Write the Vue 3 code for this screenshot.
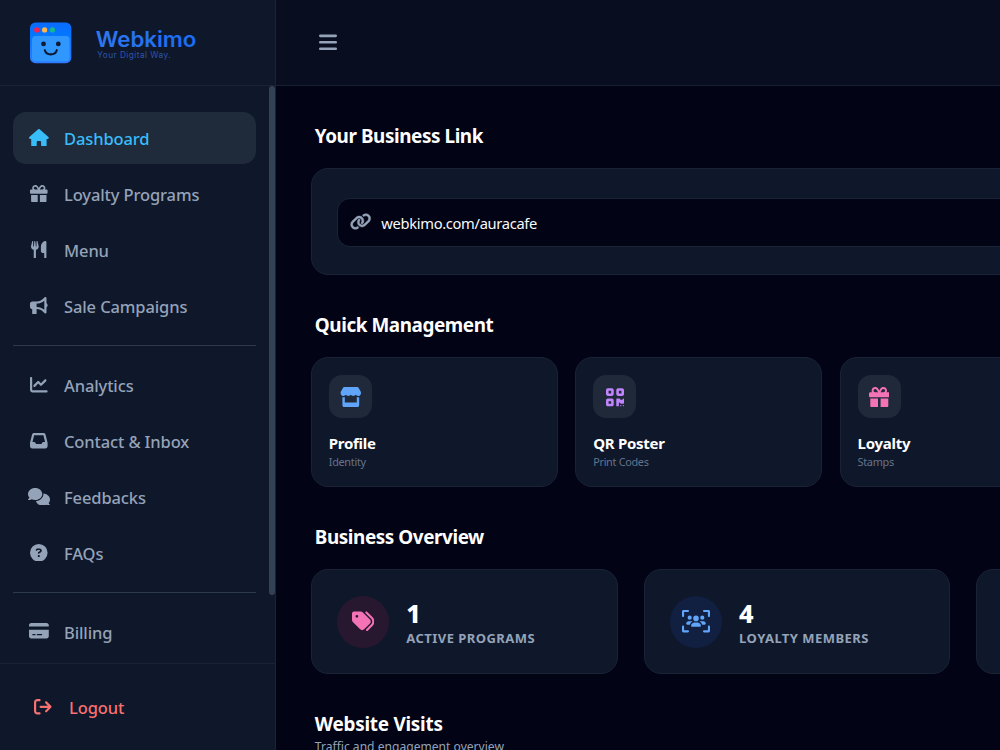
<script setup>
import { h } from 'vue'

const glyphs = {
  home: [576, 'M575.8 255.5c0 18-15 32.1-32 32.1l-32 0 .7 160.2c0 2.7-.2 5.4-.5 8.1l0 16.2c0 22.1-17.9 40-40 40l-16 0c-1.1 0-2.2 0-3.3-.1c-1.4 .1-2.8 .1-4.2 .1L416 512l-24 0c-22.1 0-40-17.9-40-40l0-24 0-64c0-17.7-14.3-32-32-32l-64 0c-17.7 0-32 14.3-32 32l0 64 0 24c0 22.1-17.9 40-40 40l-24 0-31.9 0c-1.5 0-3-.1-4.5-.2c-1.2 .1-2.4 .2-3.6 .2l-16 0c-22.1 0-40-17.9-40-40l0-112c0-.9 0-1.9 .1-2.8l0-69.7-32 0c-18 0-32-14-32-32.1c0-9 3-17 10-24L266.4 8c7-7 15-8 22-8s15 2 21 7L564.8 231.5c8 7 12 15 11 24z'],
  gift: [512, 'M190.5 68.8L225.3 128l-1.3 0-72 0c-22.1 0-40-17.9-40-40s17.9-40 40-40l2.2 0c14.9 0 28.8 7.9 36.3 20.8zM64 88c0 14.4 3.5 28 9.6 40L32 128c-17.7 0-32 14.3-32 32l0 64c0 17.7 14.3 32 32 32l448 0c17.7 0 32-14.3 32-32l0-64c0-17.7-14.3-32-32-32l-41.6 0c6.1-12 9.6-25.6 9.6-40c0-48.6-39.4-88-88-88l-2.2 0c-31.9 0-61.5 16.9-77.7 44.4L256 85.5l-24.1-41C215.7 16.9 186.1 0 154.2 0L152 0C103.4 0 64 39.4 64 88zm336 0c0 22.1-17.9 40-40 40l-72 0-1.3 0 34.8-59.2C329.1 55.9 342.9 48 357.8 48l2.2 0c22.1 0 40 17.9 40 40zM32 288l0 176c0 26.5 21.5 48 48 48l144 0 0-224L32 288zM288 512l144 0c26.5 0 48-21.5 48-48l0-176-192 0 0 224z'],
  utensils: [448, 'M416 0C400 0 288 32 288 176l0 112c0 35.3 28.7 64 64 64l32 0 0 128c0 17.7 14.3 32 32 32s32-14.3 32-32l0-128 0-112 0-208c0-17.7-14.3-32-32-32zM64 16C64 7.8 57.9 1 49.7 .1S34.2 4.6 32.4 12.5L2.1 148.8C.7 155.1 0 161.5 0 167.9c0 45.9 35.1 83.6 80 87.7L80 480c0 17.7 14.3 32 32 32s32-14.3 32-32l0-224.4c44.9-4.1 80-41.8 80-87.7c0-6.4-.7-12.8-2.1-19.1L191.6 12.5c-1.8-8-9.3-13.3-17.4-12.4S160 7.8 160 16l0 134.2c0 5.4-4.4 9.8-9.8 9.8c-5.1 0-9.3-3.9-9.8-9L127.9 14.6C127.2 6.3 120.3 0 112 0s-15.2 6.3-15.9 14.6L83.7 151c-.5 5.1-4.7 9-9.8 9c-5.4 0-9.8-4.4-9.8-9.8L64 16z'],
  bullhorn: [512, 'M480 32c0-12.9-7.8-24.6-19.8-29.6s-25.7-2.2-34.9 6.9L381.7 53c-48 48-113.1 75-181 75l-8.7 0-32 0-96 0c-35.3 0-64 28.7-64 64l0 96c0 35.3 28.7 64 64 64l0 128c0 17.7 14.3 32 32 32l64 0c17.7 0 32-14.3 32-32l0-128 8.7 0c67.9 0 133 27 181 75l43.6 43.6c9.2 9.2 22.9 11.9 34.9 6.9s19.8-16.6 19.8-29.6l0-147.6c18.6-8.8 32-32.5 32-60.4s-13.4-51.6-32-60.4L480 32zm-64 76.7L416 240l0 131.3C357.2 317.8 280.5 288 200.7 288l-8.7 0 0-96 8.7 0c79.8 0 156.5-29.8 215.3-83.3z'],
  chart: [512, 'M64 64c0-17.7-14.3-32-32-32S0 46.3 0 64L0 400c0 44.2 35.8 80 80 80l400 0c17.7 0 32-14.3 32-32s-14.3-32-32-32L80 416c-8.8 0-16-7.2-16-16L64 64zm406.6 86.6c12.5-12.5 12.5-32.8 0-45.3s-32.8-12.5-45.3 0L320 210.7l-57.4-57.4c-12.5-12.5-32.8-12.5-45.3 0l-112 112c-12.5 12.5-12.5 32.8 0 45.3s32.8 12.5 45.3 0L240 221.3l57.4 57.4c12.5 12.5 32.8 12.5 45.3 0l128-128z'],
  inbox: [512, 'M121 32C91.6 32 66 52 58.9 80.5L1.9 308.4C.6 313.5 0 318.7 0 323.9L0 416c0 35.3 28.7 64 64 64l384 0c35.3 0 64-28.7 64-64l0-92.1c0-5.2-.6-10.4-1.9-15.5l-57-227.9C446 52 420.4 32 391 32L121 32zm0 64l270 0 48 192-51.2 0c-12.1 0-23.2 6.8-28.6 17.7l-14.3 28.6c-5.4 10.8-16.5 17.7-28.6 17.7l-120.4 0c-12.1 0-23.2-6.8-28.6-17.7l-14.3-28.6c-5.4-10.8-16.5-17.7-28.6-17.7L73 288 121 96z'],
  comments: [640, 'M208 352c114.9 0 208-78.8 208-176S322.9 0 208 0S0 78.8 0 176c0 38.6 14.7 74.3 39.6 103.4c-3.5 9.4-8.7 17.7-14.2 24.7c-4.8 6.2-9.7 11-13.3 14.3c-1.8 1.6-3.3 2.9-4.3 3.7c-.5 .4-.9 .7-1.1 .8l-.2 .2C1 327.2-1.4 334.4 .8 340.9S9.1 352 16 352c21.8 0 43.8-5.6 62.1-12.5c9.2-3.5 17.8-7.4 25.2-11.4C134.1 343.3 169.8 352 208 352zM448 176c0 112.3-99.1 196.9-216.5 207C255.8 457.4 336.4 512 432 512c38.2 0 73.9-8.7 104.7-23.9c7.5 4 16 7.9 25.2 11.4c18.3 6.9 40.3 12.5 62.1 12.5c6.9 0 13.1-4.5 15.2-11.1c2.1-6.6-.2-13.8-5.8-17.9l-.2-.2c-.2-.2-.6-.4-1.1-.8c-1-.8-2.5-2-4.3-3.7c-3.6-3.3-8.5-8.1-13.3-14.3c-5.5-7-10.7-15.4-14.2-24.7c24.9-29 39.6-64.7 39.6-103.4c0-92.8-84.9-168.9-192.6-175.5c.4 5.1 .6 10.3 .6 15.5z'],
  question: [512, 'M256 512A256 256 0 1 0 256 0a256 256 0 1 0 0 512zM169.8 165.3c7.9-22.3 29.1-37.3 52.8-37.3l58.3 0c34.9 0 63.1 28.3 63.1 63.1c0 22.6-12.1 43.5-31.7 54.8L280 264.4c-.2 13-10.9 23.6-24 23.6c-13.3 0-24-10.7-24-24l0-13.5c0-8.6 4.6-16.5 12.1-20.8l44.3-25.4c4.7-2.7 7.6-7.7 7.6-13.1c0-8.4-6.8-15.1-15.1-15.1l-58.3 0c-3.4 0-6.4 2.1-7.5 5.3l-.4 1.2c-4.4 12.5-18.2 19-30.6 14.6s-19-18.2-14.6-30.6l.4-1.2zM224 352a32 32 0 1 1 64 0 32 32 0 1 1 -64 0z'],
  card: [576, 'M64 32C28.7 32 0 60.7 0 96l0 32 576 0 0-32c0-35.3-28.7-64-64-64L64 32zM576 224L0 224 0 416c0 35.3 28.7 64 64 64l448 0c35.3 0 64-28.7 64-64l0-192zM112 352l64 0c8.8 0 16 7.2 16 16s-7.2 16-16 16l-64 0c-8.8 0-16-7.2-16-16s7.2-16 16-16zm112 16c0-8.8 7.2-16 16-16l128 0c8.8 0 16 7.2 16 16s-7.2 16-16 16l-128 0c-8.8 0-16-7.2-16-16z'],
  logout: [512, 'M502.6 278.6c12.5-12.5 12.5-32.8 0-45.3l-128-128c-12.5-12.5-32.8-12.5-45.3 0s-12.5 32.8 0 45.3L402.7 224 192 224c-17.7 0-32 14.3-32 32s14.3 32 32 32l210.7 0-73.4 73.4c-12.5 12.5-12.5 32.8 0 45.3s32.8 12.5 45.3 0l128-128zM160 96c17.7 0 32-14.3 32-32s-14.3-32-32-32L96 32C43 32 0 75 0 128L0 384c0 53 43 96 96 96l64 0c17.7 0 32-14.3 32-32s-14.3-32-32-32l-64 0c-17.7 0-32-14.3-32-32l0-256c0-17.7 14.3-32 32-32l64 0z'],
  bars: [448, 'M0 96C0 78.3 14.3 64 32 64l384 0c17.7 0 32 14.3 32 32s-14.3 32-32 32L32 128C14.3 128 0 113.7 0 96zM0 256c0-17.7 14.3-32 32-32l384 0c17.7 0 32 14.3 32 32s-14.3 32-32 32L32 288c-17.7 0-32-14.3-32-32zM448 416c0 17.7-14.3 32-32 32L32 448c-17.7 0-32-14.3-32-32s14.3-32 32-32l384 0c17.7 0 32 14.3 32 32z'],
  link: [640, 'M579.8 267.7c56.5-56.5 56.5-148 0-204.5c-50-50-128.8-56.5-186.3-15.4l-1.6 1.1c-14.4 10.3-17.7 30.3-7.4 44.6s30.3 17.7 44.6 7.4l1.6-1.1c32.1-22.9 76-19.3 103.8 8.6c31.5 31.5 31.5 82.5 0 114L422.3 334.8c-31.5 31.5-82.5 31.5-114 0c-27.9-27.9-31.5-71.8-8.6-103.8l1.1-1.6c10.3-14.4 6.9-34.4-7.4-44.6s-34.4-6.9-44.6 7.4l-1.1 1.6C206.5 251.2 213 330 263 380c56.5 56.5 148 56.5 204.5 0L579.8 267.7zM60.2 244.3c-56.5 56.5-56.5 148 0 204.5c50 50 128.8 56.5 186.3 15.4l1.6-1.1c14.4-10.3 17.7-30.3 7.4-44.6s-30.3-17.7-44.6-7.4l-1.6 1.1c-32.1 22.9-76 19.3-103.8-8.6C74 372 74 321 105.5 289.5L217.7 177.2c31.5-31.5 82.5-31.5 114 0c27.9 27.9 31.5 71.8 8.6 103.9l-1.1 1.6c-10.3 14.4-6.9 34.4 7.4 44.6s34.4 6.9 44.6-7.4l1.1-1.6C433.5 260.8 427 182 377 132c-56.5-56.5-148-56.5-204.5 0L60.2 244.3z'],
  store: [576, 'M547.6 103.8L490.3 13.1C485.2 5 476.1 0 466.4 0L109.6 0C99.9 0 90.8 5 85.7 13.1L28.3 103.8c-29.6 46.8-3.4 111.9 51.9 119.4c4 .5 8.1 .8 12.1 .8c26.1 0 49.3-11.4 65.2-29c15.9 17.6 39.1 29 65.2 29c26.1 0 49.3-11.4 65.2-29c15.9 17.6 39.1 29 65.2 29c26.2 0 49.3-11.4 65.2-29c16 17.6 39.1 29 65.2 29c4.1 0 8.1-.3 12.1-.8c55.5-7.4 81.8-72.5 52.1-119.4zM499.7 254.9c0 0 0 0-.1 0c-5.3 .7-10.7 1.1-16.2 1.1c-12.4 0-24.3-1.9-35.4-5.3L448 384l-320 0 0-133.4c-11.2 3.5-23.2 5.4-35.6 5.4c-5.5 0-11-.4-16.3-1.1l-.1 0c-4.1-.6-8.1-1.3-12-2.3L64 384l0 64c0 35.3 28.7 64 64 64l320 0c35.3 0 64-28.7 64-64l0-64 0-131.4c-4 1-8 1.8-12.3 2.3z'],
  qr: [448, 'M0 80C0 53.5 21.5 32 48 32l96 0c26.5 0 48 21.5 48 48l0 96c0 26.5-21.5 48-48 48l-96 0c-26.5 0-48-21.5-48-48L0 80zM64 96l0 64 64 0 0-64L64 96zM0 336c0-26.5 21.5-48 48-48l96 0c26.5 0 48 21.5 48 48l0 96c0 26.5-21.5 48-48 48l-96 0c-26.5 0-48-21.5-48-48l0-96zm64 16l0 64 64 0 0-64-64 0zM304 32l96 0c26.5 0 48 21.5 48 48l0 96c0 26.5-21.5 48-48 48l-96 0c-26.5 0-48-21.5-48-48l0-96c0-26.5 21.5-48 48-48zm80 64l-64 0 0 64 64 0 0-64zM256 304c0-8.8 7.2-16 16-16l64 0c8.8 0 16 7.2 16 16s7.2 16 16 16l32 0c8.8 0 16-7.2 16-16s7.2-16 16-16s16 7.2 16 16l0 96c0 8.8-7.2 16-16 16l-64 0c-8.8 0-16-7.2-16-16s-7.2-16-16-16s-16 7.2-16 16l0 64c0 8.8-7.2 16-16 16l-32 0c-8.8 0-16-7.2-16-16l0-160zM368 480a16 16 0 1 1 0-32 16 16 0 1 1 0 32zm64 0a16 16 0 1 1 0-32 16 16 0 1 1 0 32z'],
  tags: [512, 'M345 39.1L472.8 168.4c52.4 53 52.4 138.2 0 191.2L360.8 472.9c-9.3 9.4-24.5 9.5-33.9 .2s-9.5-24.5-.2-33.9L438.6 325.9c33.9-34.3 33.9-89.4 0-123.7L310.9 72.9c-9.3-9.4-9.2-24.6 .2-33.9s24.6-9.2 33.9 .2zM0 229.5L0 80C0 53.5 21.5 32 48 32l149.5 0c17 0 33.3 6.7 45.3 18.7l168 168c25 25 25 65.5 0 90.5L277.3 442.7c-25 25-65.5 25-90.5 0l-168-168C6.7 262.7 0 246.5 0 229.5zM144 144a32 32 0 1 0 -64 0 32 32 0 1 0 64 0z'],
  users: [640, 'M48 48l88 0c13.3 0 24-10.7 24-24s-10.7-24-24-24L32 0C14.3 0 0 14.3 0 32L0 136c0 13.3 10.7 24 24 24s24-10.7 24-24l0-88zM175.8 224a48 48 0 1 0 0-96 48 48 0 1 0 0 96zm-26.5 32C119.9 256 96 279.9 96 309.3c0 14.7 11.9 26.7 26.7 26.7l56.1 0c8-34.1 32.8-61.7 65.2-73.6c-7.5-4.1-16.2-6.4-25.3-6.4l-69.3 0zm368 80c14.7 0 26.7-11.9 26.7-26.7c0-29.5-23.9-53.3-53.3-53.3l-69.3 0c-9.2 0-17.8 2.3-25.3 6.4c32.4 11.9 57.2 39.5 65.2 73.6l56.1 0zm-89.4 0c-8.6-24.3-29.9-42.6-55.9-47c-3.9-.7-7.9-1-12-1l-80 0c-4.1 0-8.1 .3-12 1c-26 4.4-47.3 22.7-55.9 47c-2.7 7.5-4.1 15.6-4.1 24c0 13.3 10.7 24 24 24l176 0c13.3 0 24-10.7 24-24c0-8.4-1.4-16.5-4.1-24zM464 224a48 48 0 1 0 0-96 48 48 0 1 0 0 96zm-80-32a64 64 0 1 0 -128 0 64 64 0 1 0 128 0zM504 48l88 0 0 88c0 13.3 10.7 24 24 24s24-10.7 24-24l0-104c0-17.7-14.3-32-32-32L504 0c-13.3 0-24 10.7-24 24s10.7 24 24 24zM48 464l0-88c0-13.3-10.7-24-24-24s-24 10.7-24 24L0 480c0 17.7 14.3 32 32 32l104 0c13.3 0 24-10.7 24-24s-10.7-24-24-24l-88 0zm456 0c-13.3 0-24 10.7-24 24s10.7 24 24 24l104 0c17.7 0 32-14.3 32-32l0-104c0-13.3-10.7-24-24-24s-24 10.7-24 24l0 88-88 0z'],
}

const Icon = ({ name, size, width }) => {
  const [w, d] = glyphs[name]
  return h('svg', {
    viewBox: `0 0 ${w} 512`,
    width: width || (w / 512) * size,
    height: size,
    preserveAspectRatio: 'none',
    fill: 'currentColor',
  }, [h('path', { d })])
}
Icon.props = ['name', 'size', 'width']

const nav = [
  [
    { icon: 'home', label: 'Dashboard', active: true },
    { icon: 'gift', label: 'Loyalty Programs' },
    { icon: 'utensils', label: 'Menu' },
    { icon: 'bullhorn', label: 'Sale Campaigns' },
  ],
  [
    { icon: 'chart', label: 'Analytics' },
    { icon: 'inbox', label: 'Contact & Inbox' },
    { icon: 'comments', label: 'Feedbacks' },
    { icon: 'question', label: 'FAQs' },
  ],
  [{ icon: 'card', label: 'Billing' }],
]

const quick = [
  { icon: 'store', width: 21.6, tone: 'blue', title: 'Profile', sub: 'Identity' },
  { icon: 'qr', tone: 'purple', title: 'QR Poster', sub: 'Print Codes' },
  { icon: 'gift', tone: 'pink', title: 'Loyalty', sub: 'Stamps' },
]

const stats = [
  { icon: 'tags', tone: 'pink', value: '1', label: 'Active Programs' },
  { icon: 'users', tone: 'blue', value: '4', label: 'Loyalty Members' },
]
</script>

<template>
  <div class="app">
    <aside class="sidebar">
      <div class="brand">
        <svg width="200" height="60" viewBox="24 12 200 60">
          <defs>
            <linearGradient id="tile" x1="0" y1="0" x2="0" y2="1">
              <stop offset="0" stop-color="#0a6cff" />
              <stop offset="0.3" stop-color="#0476ff" />
              <stop offset="1" stop-color="#2f7bff" />
            </linearGradient>
            <linearGradient id="word" x1="0" y1="0" x2="1" y2="0">
              <stop offset="0" stop-color="#2f78ee" />
              <stop offset="1" stop-color="#1a6cf2" />
            </linearGradient>
          </defs>
          <rect x="30" y="22.4" width="41.3" height="40.8" rx="5.5" fill="url(#tile)" />
          <rect x="32" y="36" width="37.5" height="25.2" rx="3.5" fill="#3097ff" />
          <circle cx="36.8" cy="29.9" r="2.6" fill="#fb1f4e" />
          <circle cx="44.6" cy="29.9" r="2.6" fill="#ffb54a" />
          <circle cx="52.4" cy="29.9" r="2.6" fill="#17b890" />
          <circle cx="43.5" cy="43.9" r="2.4" fill="#0d1b33" />
          <circle cx="58.3" cy="43.9" r="2.4" fill="#0d1b33" />
          <path d="M44.8 50.2C46.5 55.7 55.1 55.7 56.8 50.2" fill="none" stroke="#0d1b33" stroke-width="2.1" stroke-linecap="round" />
          <text x="95.8" y="46.8" class="wordmark" textLength="100.6" lengthAdjust="spacingAndGlyphs" fill="url(#word)">Webkimo</text>
          <text x="97.3" y="58.2" class="tagline" textLength="73.4" lengthAdjust="spacing" fill="#2c56ad">Your Digital Way.</text>
        </svg>
      </div>

      <nav class="nav">
        <div v-for="(group, i) in nav" :key="i" class="group">
          <a v-for="item in group" :key="item.label" class="item" :class="{ active: item.active }">
            <span class="ico"><Icon :name="item.icon" :size="17.6" /></span>
            <span class="txt">{{ item.label }}</span>
          </a>
        </div>
        <span class="thumb"></span>
      </nav>

      <div class="foot">
        <a class="logout">
          <span class="ico"><Icon name="logout" :size="17.6" /></span>
          <span>Logout</span>
        </a>
      </div>
    </aside>

    <div class="page">
      <header class="top"><Icon name="bars" :size="20.6" /></header>

      <main class="content">
        <section>
          <h2>Your Business Link</h2>
          <div class="panel linkpanel">
            <div class="url">
              <Icon name="link" :size="17" />
              <span>webkimo.com/auracafe</span>
            </div>
          </div>
        </section>

        <section>
          <h2>Quick Management</h2>
          <div class="row quickrow">
            <div v-for="q in quick" :key="q.title" class="panel quick">
              <span class="badge" :class="q.tone"><Icon :name="q.icon" :size="20.6" :width="q.width" /></span>
              <b>{{ q.title }}</b>
              <small>{{ q.sub }}</small>
            </div>
          </div>
        </section>

        <section>
          <h2>Business Overview</h2>
          <div class="row statrow">
            <div v-for="s in stats" :key="s.label" class="panel stat">
              <span class="disc" :class="s.tone"><Icon :name="s.icon" :size="22.4" /></span>
              <div class="figures">
                <div class="value">{{ s.value }}</div>
                <div class="label">{{ s.label }}</div>
              </div>
            </div>
            <div class="panel stat"></div>
          </div>
        </section>

        <section>
          <h2 class="visits">Website Visits</h2>
          <p class="desc">Traffic and engagement overview</p>
        </section>
      </main>
    </div>
  </div>
</template>

<style>
body { margin: 0; background: #020314; overflow: hidden; }
</style>

<style scoped>
.app {
  display: flex;
  width: 1000px;
  height: 750px;
  overflow: hidden;
  background: #020314;
  color: #fff;
  font-family: "Noto Sans", "Open Sans", sans-serif;
}
.app * { box-sizing: border-box; }
svg { display: block; flex: none; }

.sidebar {
  flex: none;
  display: flex;
  flex-direction: column;
  width: 276px;
  background: #0f172a;
  border-right: 1px solid #1a2335;
}
.brand {
  flex: none;
  height: 86px;
  padding: 12px 0 0 24px;
  border-bottom: 1px solid #1a2335;
}
.wordmark { font: 600 21.3px Inter, sans-serif; }
.tagline { font: 400 8.3px Inter, sans-serif; }

.nav {
  position: relative;
  flex: none;
  height: 577px;
  padding: 26.3px 19px 0 13px;
  overflow: hidden;
}
.group { display: flex; flex-direction: column; gap: 4.4px; }
.group + .group {
  margin-top: 13px;
  padding-top: 13.3px;
  border-top: 1px solid #2d394d;
}
.item {
  display: flex;
  align-items: center;
  gap: 15px;
  height: 51.6px;
  padding-left: 16px;
  border-radius: 13px;
  font-size: 16.5px;
  font-weight: 550;
  letter-spacing: -0.12px;
  color: #94a3b8;
}
.item.active { background: #1f2a3b; color: #38bdf8; }
.txt { padding-top: 1px; }
.ico { display: flex; justify-content: center; width: 20px; margin-top: -1px; }
.thumb {
  position: absolute;
  top: 0;
  right: 0;
  width: 6px;
  height: 509px;
  border-radius: 3px;
  background: #334155;
}
.foot {
  flex: 1;
  padding: 18px 0 0 33px;
  border-top: 1px solid #1a2335;
}
.logout {
  display: flex;
  align-items: center;
  gap: 16px;
  height: 51px;
  font-size: 16.5px;
  font-weight: 550;
  letter-spacing: -0.1px;
  color: #f87171;
}

.page { flex: none; width: 760px; }
.top {
  display: flex;
  align-items: center;
  height: 86px;
  padding-left: 43px;
  background: #080d1f;
  border-bottom: 1px solid #171f31;
  color: #94a3b8;
}
.content { padding: 37px 0 0 34.8px; }
section { margin-bottom: 37px; }
h2 {
  margin: 0 0 19px;
  padding-left: 4px;
  font-size: 18.9px;
  font-weight: 700;
  line-height: 26px;
  letter-spacing: -0.43px;
  white-space: nowrap;
}
h2.visits { margin-bottom: 1px; letter-spacing: -0.25px; }
.panel {
  flex: none;
  background: #0f172a;
  border: 1px solid #1a2335;
  border-radius: 17px;
}
.linkpanel { width: 760px; height: 107px; padding: 29px 25.5px; }
.url {
  display: flex;
  align-items: center;
  gap: 9.6px;
  height: 49px;
  padding-left: 12.2px;
  border: 1px solid #1a2335;
  border-radius: 13px;
  background: #020314;
  font-size: 14.7px;
  letter-spacing: -0.32px;
}
.url svg { color: #94a3b8; margin-top: -2px; stroke: currentColor; stroke-width: 12px; overflow: visible; }
.url span { color: #f8fafc; }

.row { display: flex; }
.quickrow { gap: 17.4px; }
.quick {
  display: flex;
  flex-direction: column;
  width: 247px;
  height: 130px;
  padding: 17px 17px 0;
}
.badge {
  display: flex;
  align-items: center;
  justify-content: center;
  width: 43px;
  height: 43px;
  margin-bottom: 15px;
  padding-top: 1px;
  border-radius: 13px;
  background: #1f293a;
}
.blue { color: #60a5fa; }
.purple { color: #c084fc; }
.pink { color: #f472b6; }
.quick b { font-size: 15px; line-height: 20px; letter-spacing: -0.28px; }
.quick small {
  margin-top: 2px;
  font-size: 10.9px;
  line-height: 14px;
  letter-spacing: -0.32px;
  color: #64748b;
}

.statrow { gap: 26px; }
.stat {
  display: flex;
  align-items: center;
  gap: 17px;
  width: 306.8px;
  height: 105px;
  padding-left: 25.5px;
}
.disc {
  display: flex;
  align-items: center;
  justify-content: center;
  width: 52px;
  height: 52px;
  border-radius: 50%;
}
.disc.pink { background: #28182f; }
.disc.blue { background: #111f40; }
.figures { padding-top: 2px; }
.value { font-size: 25.2px; font-weight: 800; line-height: 28px; }
.label {
  margin-top: 2px;
  font-size: 13px;
  font-weight: 700;
  line-height: 18px;
  letter-spacing: 0.45px;
  text-transform: uppercase;
  color: #94a3b8;
  white-space: nowrap;
}
.desc {
  margin: 0;
  padding-left: 4px;
  font-size: 12.1px;
  line-height: 18px;
  color: #94a3b8;
}
</style>
